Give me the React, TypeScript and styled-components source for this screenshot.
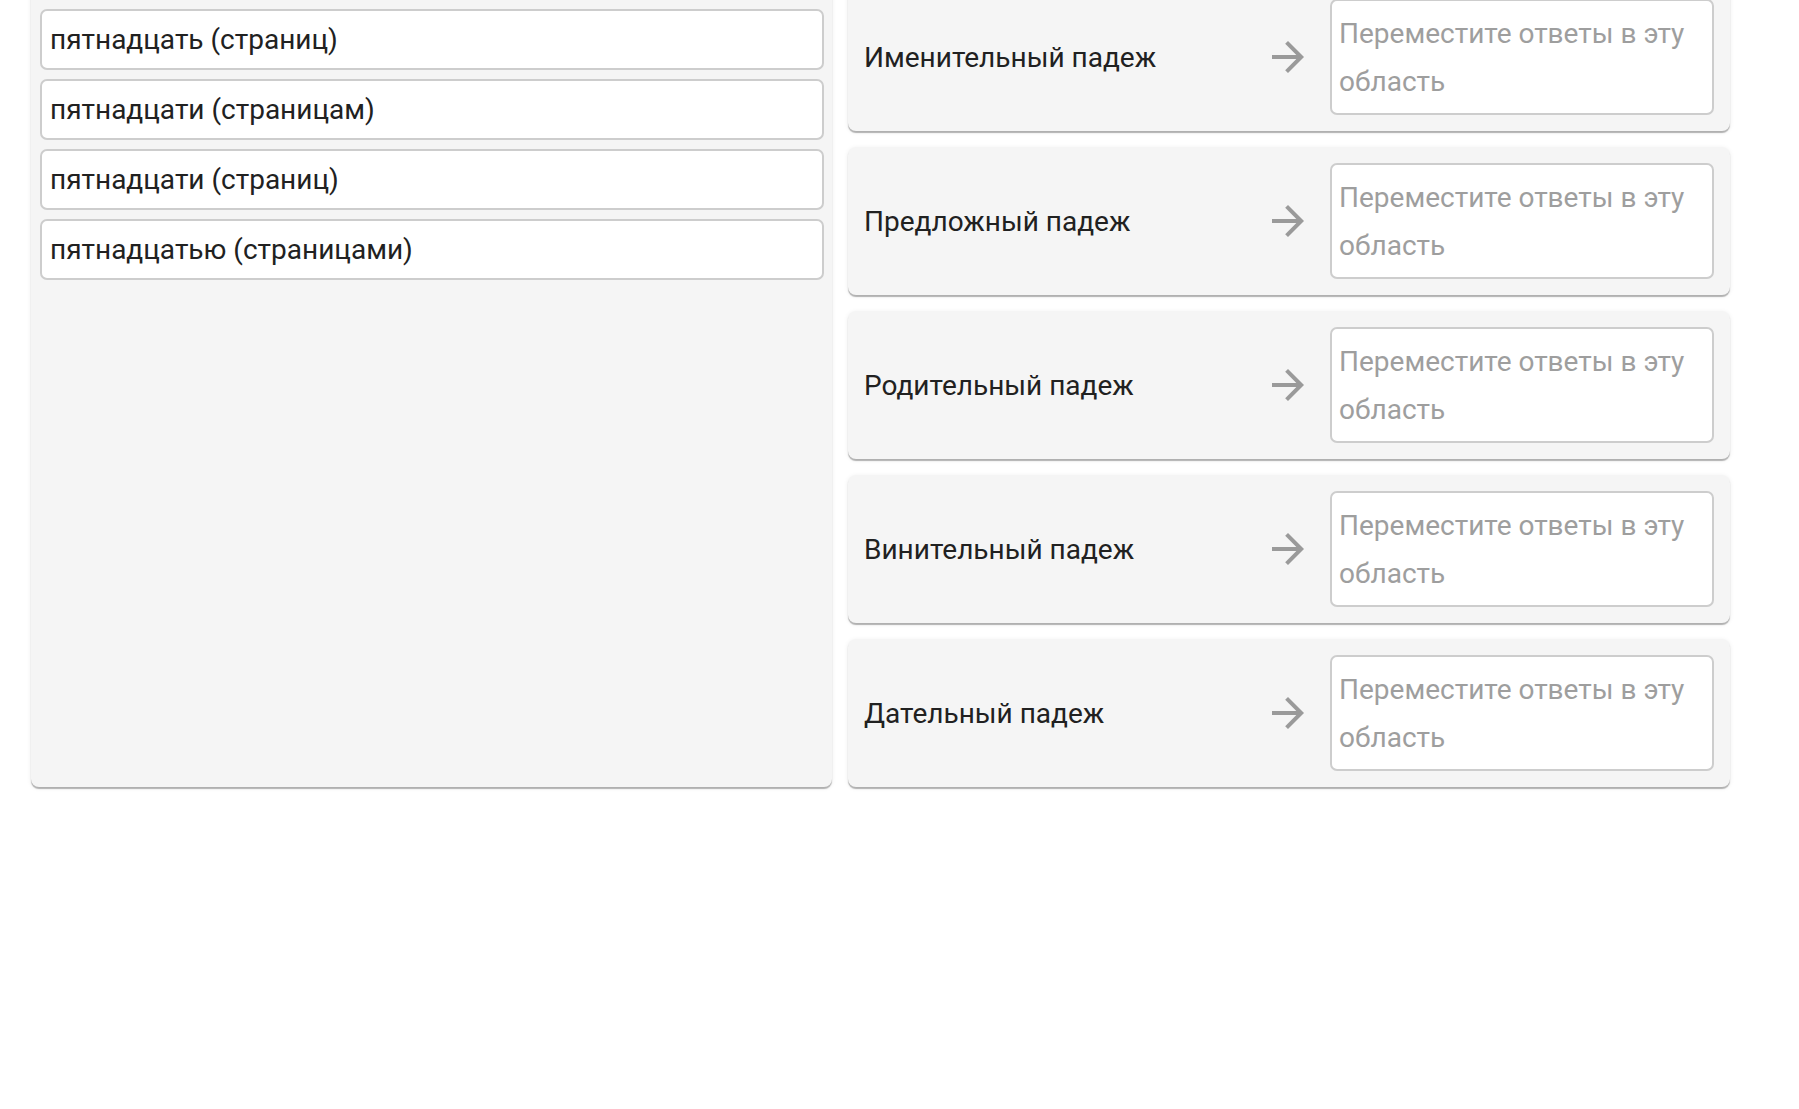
import styled, { createGlobalStyle } from "styled-components";

const GlobalStyle = createGlobalStyle`
  html, body {
    margin: 0;
    padding: 0;
    background: #fff;
    font-family: Roboto, "Noto Sans", "Liberation Sans", sans-serif;
  }
  body {
    overflow: hidden;
  }
`;

const answers = [
  "пятнадцати (страниц)",
  "пятнадцать (страниц)",
  "пятнадцати (страницам)",
  "пятнадцати (страниц)",
  "пятнадцатью (страницами)",
];

const cases = [
  "Именительный падеж",
  "Предложный падеж",
  "Родительный падеж",
  "Винительный падеж",
  "Дательный падеж",
];

const ArrowIcon = () => (
  <svg width="48" height="48" viewBox="0 0 24 24" fill="currentColor">
    <path d="M12 4l-1.41 1.41L16.17 11H4v2h12.17l-5.58 5.59L12 20l8-8z" />
  </svg>
);

const App = () => {
  return (
    <Page>
      <GlobalStyle />
      <Board>
        <AnswerPanel>
          {answers.map((text, index) => (
            <AnswerItem key={index}>{text}</AnswerItem>
          ))}
        </AnswerPanel>
        <CaseColumn>
          {cases.map((title) => (
            <CaseCard key={title}>
              <CaseLabel>{title}</CaseLabel>
              <Arrow>
                <ArrowIcon />
              </Arrow>
              <DropZone>Переместите ответы в эту область</DropZone>
            </CaseCard>
          ))}
        </CaseColumn>
      </Board>
    </Page>
  );
};

const Page = styled.div`
  width: 1799px;
  height: 1109px;
  overflow: hidden;
`;

const Board = styled.div`
  display: grid;
  grid-template-columns: 801px 882px;
  column-gap: 16px;
  align-items: stretch;
  padding-left: 31px;
  margin-top: -69px;
`;

const Surface = styled.div`
  background: #f5f5f5;
  border-radius: 8px;
  box-shadow: 0 2px 1px rgba(0, 0, 0, 0.28), 0 1px 5px rgba(0, 0, 0, 0.08);
`;

const AnswerPanel = styled(Surface)`
  display: flex;
  flex-direction: column;
  gap: 9px;
  padding: 8px 8px 8px 9px;
`;

const AnswerItem = styled.div`
  box-sizing: border-box;
  height: 61px;
  display: flex;
  align-items: center;
  padding: 0 8px;
  background: #fff;
  border: 2px solid #cdcdcd;
  border-radius: 7px;
  font-size: 28px;
  color: #212121;
  white-space: nowrap;
`;

const CaseColumn = styled.div`
  display: flex;
  flex-direction: column;
  gap: 16px;
  padding-top: 52px;
`;

const CaseCard = styled(Surface)`
  box-sizing: border-box;
  height: 148px;
  display: flex;
  align-items: center;
  padding: 16px;
`;

const CaseLabel = styled.div`
  flex: 1;
  font-size: 28px;
  color: #212121;
`;

const Arrow = styled.div`
  display: flex;
  color: #9a9a9a;
  margin-right: 18px;
`;

const DropZone = styled.div`
  box-sizing: border-box;
  width: 384px;
  height: 116px;
  padding: 9px 7px 6px;
  background: #fff;
  border: 2px solid #cdcdcd;
  border-radius: 7px;
  font-size: 28px;
  line-height: 48px;
  color: #9e9e9e;
`;

export default App;
